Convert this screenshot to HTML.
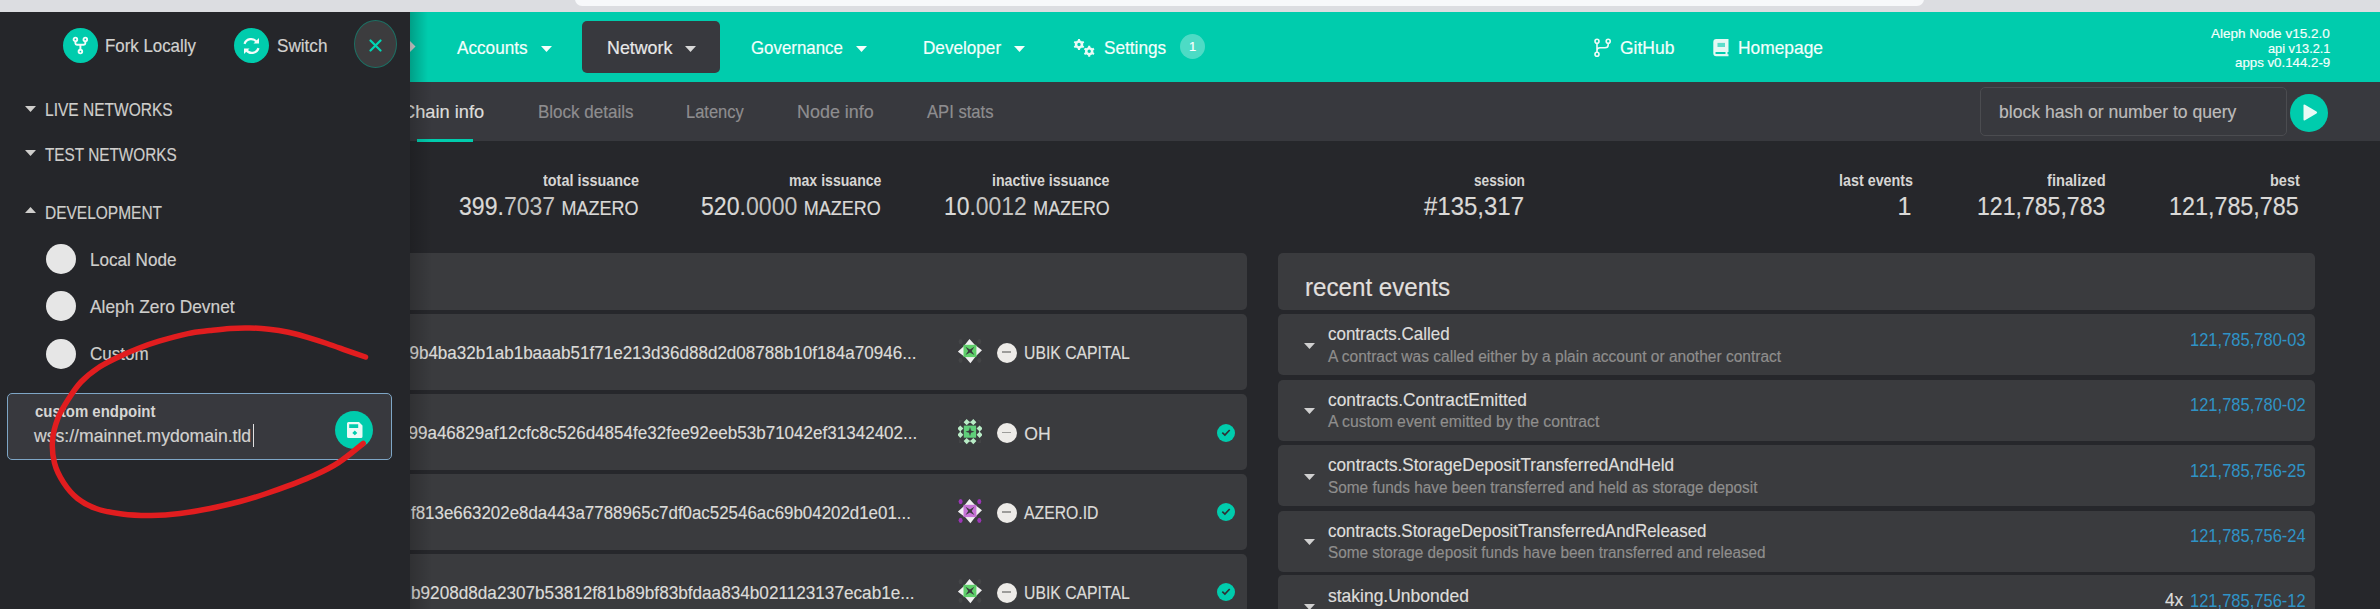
<!DOCTYPE html>
<html><head><meta charset="utf-8"><style>
html,body{margin:0;padding:0;width:2380px;height:609px;overflow:hidden;background:#26272b;}
body{position:relative;font-family:"Liberation Sans",sans-serif;}
.t{position:absolute;white-space:nowrap;line-height:1;-webkit-text-stroke:0.18px currentColor;}
.r{position:absolute;}
#main{position:absolute;left:0;top:0;width:2380px;height:609px;}
#side{position:absolute;left:0;top:0;width:2380px;height:609px;}
</style></head><body>
<div id="main">
<div class="r" style="left:0px;top:0px;width:2380px;height:12px;background:#dcdde1;"></div>
<div class="r" style="left:575px;top:-10px;width:1349px;height:16px;background:#f7f8fa;border-radius:0 0 7px 7px;"></div>
<div class="r" style="left:0px;top:12px;width:2380px;height:597px;background:#26272b;"></div>
<div class="r" style="left:410px;top:12px;width:1970px;height:70px;background:#00ccad;"></div>
<div class="r" style="left:410px;top:82px;width:1970px;height:59px;background:#38393e;"></div>
<div class="r" style="left:417px;top:139px;width:56px;height:3px;background:#00ccad;"></div>
<svg class="r" style="left:410px;top:41px" width="6" height="11"><path d="M0 0 L5.5 5.5 L0 11Z" fill="#d8d8d8"/></svg>
<div class="t" style="left:457.30px;top:39.63px;font-size:17.8px;color:#f4fffc;font-weight:400;transform:scaleX(0.9652);transform-origin:0 0;">Accounts</div>
<svg class="r" style="left:541px;top:45.5px" width="11" height="6"><path d="M0 0 L11 0 L5.5 6Z" fill="#f4fffc"/></svg>
<div class="r" style="left:582px;top:21px;width:138px;height:52px;background:#38393e;border-radius:5px;"></div>
<div class="t" style="left:607.00px;top:39.63px;font-size:17.8px;color:#e8e8e8;font-weight:400;transform:scaleX(1.0028);transform-origin:0 0;">Network</div>
<svg class="r" style="left:685px;top:45.5px" width="11" height="6"><path d="M0 0 L11 0 L5.5 6Z" fill="#d8d8d8"/></svg>
<div class="t" style="left:751.20px;top:39.63px;font-size:17.8px;color:#f4fffc;font-weight:400;transform:scaleX(0.9484);transform-origin:0 0;">Governance</div>
<svg class="r" style="left:856px;top:45.5px" width="11" height="6"><path d="M0 0 L11 0 L5.5 6Z" fill="#f4fffc"/></svg>
<div class="t" style="left:922.50px;top:39.63px;font-size:17.8px;color:#f4fffc;font-weight:400;transform:scaleX(0.9634);transform-origin:0 0;">Developer</div>
<svg class="r" style="left:1014px;top:45.5px" width="11" height="6"><path d="M0 0 L11 0 L5.5 6Z" fill="#f4fffc"/></svg>
<svg class="r" style="left:1072px;top:38px" width="24" height="19" viewBox="0 0 24 19">
<path d="M4.90 2.86 L5.86 2.46 L6.02 0.99 L7.98 0.99 L8.14 2.46 L9.10 2.86 L9.93 3.49 L11.28 2.89 L12.26 4.59 L11.07 5.47 L11.20 6.50 L11.07 7.53 L12.26 8.41 L11.28 10.11 L9.93 9.51 L9.10 10.14 L8.14 10.54 L7.98 12.01 L6.02 12.01 L5.86 10.54 L4.90 10.14 L4.07 9.51 L2.72 10.11 L1.74 8.41 L2.93 7.53 L2.80 6.50 L2.93 5.47 L1.74 4.59 L2.72 2.89 L4.07 3.49Z M8.70 6.50 A1.7 1.7 0 1 0 5.30 6.50 A1.7 1.7 0 1 0 8.70 6.50Z M15.10 9.66 L16.06 9.26 L16.22 7.79 L18.18 7.79 L18.34 9.26 L19.30 9.66 L20.13 10.29 L21.48 9.69 L22.46 11.39 L21.27 12.27 L21.40 13.30 L21.27 14.33 L22.46 15.21 L21.48 16.91 L20.13 16.31 L19.30 16.94 L18.34 17.34 L18.18 18.81 L16.22 18.81 L16.06 17.34 L15.10 16.94 L14.27 16.31 L12.92 16.91 L11.94 15.21 L13.13 14.33 L13.00 13.30 L13.13 12.27 L11.94 11.39 L12.92 9.69 L14.27 10.29Z M18.90 13.30 A1.7 1.7 0 1 0 15.50 13.30 A1.7 1.7 0 1 0 18.90 13.30Z" fill="#eafaf6" fill-rule="evenodd"/></svg>
<div class="t" style="left:1103.70px;top:39.63px;font-size:17.8px;color:#f4fffc;font-weight:400;transform:scaleX(0.9682);transform-origin:0 0;">Settings</div>
<div class="r" style="left:1180px;top:34px;width:25px;height:25px;background:rgba(255,255,255,0.3);border-radius:50%;"></div>
<div class="t" style="left:1189.00px;top:40.30px;font-size:13px;color:#ffffff;font-weight:400;">1</div>
<svg class="r" style="left:1594px;top:38px" width="18" height="20" viewBox="0 0 18 20">
<g fill="none" stroke="#f0fbf8" stroke-width="1.6">
<circle cx="3" cy="3.2" r="2"/><circle cx="14.2" cy="3.2" r="2"/><circle cx="3" cy="16.3" r="2"/>
<path d="M3 5.2 V14.3 M14.2 5.2 V7 Q14.2 9.8 11 9.8 H6 Q3 9.8 3 12.5"/>
</g></svg>
<div class="t" style="left:1619.50px;top:39.63px;font-size:17.8px;color:#f4fffc;font-weight:400;transform:scaleX(0.9845);transform-origin:0 0;">GitHub</div>
<svg class="r" style="left:1712px;top:39px" width="18" height="18" viewBox="0 0 18 18">
<path d="M4.3 0 H16.5 V13 H15.5 V15.3 H16.5 V17.3 H4.3 Q1.3 17.3 1.3 14.3 V3 Q1.3 0 4.3 0Z M4.3 13.1 H13.5 V15.1 H4.3 Q3.3 15.1 3.3 14.1 Q3.3 13.1 4.3 13.1Z" fill="#e6f8f4" fill-rule="evenodd"/>
<rect x="5.5" y="3.9" width="7.5" height="4.1" fill="#00ccad" opacity="0.6"/>
</svg>
<div class="t" style="left:1738.00px;top:39.63px;font-size:17.8px;color:#f4fffc;font-weight:400;transform:scaleX(0.9765);transform-origin:0 0;">Homepage</div>
<div class="t" style="left:2211.20px;top:27.19px;font-size:13.6px;color:#f4fffc;font-weight:400;transform:scaleX(0.9943);transform-origin:0 0;">Aleph Node v15.2.0</div>
<div class="t" style="left:2267.50px;top:41.79px;font-size:13.6px;color:#f4fffc;font-weight:400;transform:scaleX(0.9388);transform-origin:0 0;">api v13.2.1</div>
<div class="t" style="left:2234.80px;top:56.29px;font-size:13.6px;color:#f4fffc;font-weight:400;transform:scaleX(0.9763);transform-origin:0 0;">apps v0.144.2-9</div>
<div class="t" style="left:402.00px;top:103.63px;font-size:17.8px;color:#dedddb;font-weight:400;transform:scaleX(1.0263);transform-origin:0 0;">Chain info</div>
<div class="t" style="left:537.70px;top:103.63px;font-size:17.8px;color:#8e8d8f;font-weight:400;transform:scaleX(0.9565);transform-origin:0 0;">Block details</div>
<div class="t" style="left:686.40px;top:103.63px;font-size:17.8px;color:#8e8d8f;font-weight:400;transform:scaleX(0.9280);transform-origin:0 0;">Latency</div>
<div class="t" style="left:797.20px;top:103.63px;font-size:17.8px;color:#8e8d8f;font-weight:400;transform:scaleX(1.0081);transform-origin:0 0;">Node info</div>
<div class="t" style="left:926.90px;top:103.63px;font-size:17.8px;color:#8e8d8f;font-weight:400;transform:scaleX(0.9354);transform-origin:0 0;">API stats</div>
<div class="r" style="left:1980px;top:87px;width:307px;height:48.5px;background:transparent;border:1px solid #4b4c50;border-radius:5px;box-sizing:border-box;"></div>
<div class="t" style="left:1999.30px;top:103.63px;font-size:17.8px;color:#bdbcbb;font-weight:400;transform:scaleX(0.9884);transform-origin:0 0;">block hash or number to query</div>
<div class="r" style="left:2290px;top:94px;width:38px;height:38px;background:#00ccad;border-radius:50%;"></div>
<svg class="r" style="left:2302px;top:104px" width="16" height="18"><path d="M1.5 1.5 Q1.5 0 3 0.8 L14.5 7.6 Q15.8 8.5 14.5 9.4 L3 16.2 Q1.5 17 1.5 15.5Z" fill="#e8faf6"/></svg>
<div class="t" style="left:542.60px;top:172.69px;font-size:15.6px;color:#d6d5d3;font-weight:700;transform:scaleX(0.9236);transform-origin:0 0;-webkit-text-stroke:0;">total issuance</div>
<div class="t" style="left:788.50px;top:172.69px;font-size:15.6px;color:#d6d5d3;font-weight:700;transform:scaleX(0.9039);transform-origin:0 0;-webkit-text-stroke:0;">max issuance</div>
<div class="t" style="left:992.00px;top:172.69px;font-size:15.6px;color:#d6d5d3;font-weight:700;transform:scaleX(0.9097);transform-origin:0 0;-webkit-text-stroke:0;">inactive issuance</div>
<div class="t" style="left:1474.00px;top:172.69px;font-size:15.6px;color:#d6d5d3;font-weight:700;transform:scaleX(0.8776);transform-origin:0 0;-webkit-text-stroke:0;">session</div>
<div class="t" style="left:1839.30px;top:172.69px;font-size:15.6px;color:#d6d5d3;font-weight:700;transform:scaleX(0.9188);transform-origin:0 0;-webkit-text-stroke:0;">last events</div>
<div class="t" style="left:2047.20px;top:172.69px;font-size:15.6px;color:#d6d5d3;font-weight:700;transform:scaleX(0.9407);transform-origin:0 0;-webkit-text-stroke:0;">finalized</div>
<div class="t" style="left:2269.60px;top:172.69px;font-size:15.6px;color:#d6d5d3;font-weight:700;transform:scaleX(0.9296);transform-origin:0 0;-webkit-text-stroke:0;">best</div>
<div class="t" style="left:458.90px;top:194.24px;font-size:25px;color:#dad9d7;transform:scaleX(0.9222);transform-origin:0 0;"><span style="color:#dad9d7">399.</span><span style="color:#c4c3c1;-webkit-text-stroke:0;">7037</span> <span style="font-size:19.5px;color:#dad9d7">MAZERO</span></div>
<div class="t" style="left:701.20px;top:194.24px;font-size:25px;color:#dad9d7;transform:scaleX(0.9238);transform-origin:0 0;"><span style="color:#dad9d7">520.</span><span style="color:#c4c3c1;-webkit-text-stroke:0;">0000</span> <span style="font-size:19.5px;color:#dad9d7">MAZERO</span></div>
<div class="t" style="left:943.80px;top:194.24px;font-size:25px;color:#dad9d7;transform:scaleX(0.9168);transform-origin:0 0;"><span style="color:#dad9d7">10.</span><span style="color:#c4c3c1;-webkit-text-stroke:0;">0012</span> <span style="font-size:19.5px;color:#dad9d7">MAZERO</span></div>
<div class="t" style="left:1424.30px;top:194.24px;font-size:25px;color:#dad9d7;font-weight:400;transform:scaleX(0.9592);transform-origin:0 0;">#135,317</div>
<div class="t" style="left:1897.42px;top:194.24px;font-size:25px;color:#dad9d7;font-weight:400;">1</div>
<div class="t" style="left:1976.60px;top:194.24px;font-size:25px;color:#dad9d7;font-weight:400;transform:scaleX(0.9230);transform-origin:0 0;">121,785,783</div>
<div class="t" style="left:2169.30px;top:194.24px;font-size:25px;color:#dad9d7;font-weight:400;transform:scaleX(0.9331);transform-origin:0 0;">121,785,785</div>
<div class="r" style="left:300px;top:253px;width:947px;height:56.5px;background:#3a3b3e;border-radius:5px;"></div>
<div class="r" style="left:300px;top:314px;width:947px;height:75.5px;background:#3a3b3e;border-radius:5px;"></div>
<div class="t" style="left:381.19px;top:343.71px;font-size:18.3px;color:#dcdbd9;transform:scaleX(0.9320);transform-origin:0 0;">1d89b4ba32b1ab1baaab51f71e213d36d88d2d08788b10f184a70946...</div>
<svg class="r" style="left:958px;top:339px" width="26" height="26" viewBox="0 0 26 26">
<g fill="#444547"><ellipse cx="2.6" cy="2.6" rx="2" ry="2.6"/><ellipse cx="21.3" cy="2.6" rx="2" ry="2.6"/><ellipse cx="2.6" cy="21.3" rx="2" ry="2.6"/><ellipse cx="21.3" cy="21.3" rx="2" ry="2.6"/></g>
<path d="M11.5 0 L16.5 5.5 L24 11.2 L18.5 16.5 L12.4 24.2 L7.5 18.5 L-0.2 12.7 L5.5 7.5Z" fill="#f0f0f0"/>
<rect x="5.5" y="5.8" width="12.9" height="12.3" fill="#5fcf6a"/>
<path d="M7.5 7.8 L11.95 10.5 L16.4 7.8 L13.7 11.95 L16.4 16.1 L11.95 13.4 L7.5 16.1 L10.2 11.95Z" fill="#3a3b3e"/>
</svg>
<div class="r" style="left:996.65px;top:342.55px;width:20.5px;height:20.5px;background:#edebe8;border-radius:50%;"></div>
<div class="r" style="left:1001.5px;top:351.3px;width:9.5px;height:1.6px;background:#9d9c9a;"></div>
<div class="t" style="left:1024.30px;top:345.30px;font-size:17.6px;color:#dcdbd9;font-weight:400;transform:scaleX(0.8957);transform-origin:0 0;">UBIK CAPITAL</div>
<div class="r" style="left:300px;top:394.3px;width:947px;height:75.5px;background:#3a3b3e;border-radius:5px;"></div>
<div class="t" style="left:381.15px;top:424.01px;font-size:18.3px;color:#dcdbd9;transform:scaleX(0.9320);transform-origin:0 0;">4c599a46829af12cfc8c526d4854fe32fee92eeb53b71042ef31342402...</div>
<svg class="r" style="left:958px;top:419.3px" width="24" height="26" viewBox="0 0 24 26">
<g fill="#434446"><path d="M1 1 L5 1 L1 5Z M23 1 L23 5 L19 1Z M1 24 L1 20 L5 24Z M23 24 L19 24 L23 20Z"/></g>
<path d="M8.7 0.10000000000000009l3.1 3.1-3.1 3.1-3.1-3.1zM15.3 0.10000000000000009l3.1 3.1-3.1 3.1-3.1-3.1zM2.3 6.4l3.1 3.1-3.1 3.1-3.1-3.1zM2.3 12.700000000000001l3.1 3.1-3.1 3.1-3.1-3.1zM21.6 6.4l3.1 3.1-3.1 3.1-3.1-3.1zM21.6 12.700000000000001l3.1 3.1-3.1 3.1-3.1-3.1zM8.7 19.0l3.1 3.1-3.1 3.1-3.1-3.1zM15.3 19.0l3.1 3.1-3.1 3.1-3.1-3.1z" fill="#b8ecc6"/>
<path d="M8.7 3.2 H15.3 M2.3 9.5 V15.8 M21.6 9.5 V15.8 M8.7 22.1 H15.3" stroke="#b8ecc6" stroke-width="0.8"/>
<rect x="5.8" y="6.6" width="12.3" height="12.1" fill="#5fcf7a"/>
<path d="M12 8 L13 11.6 L16.5 12.7 L13 13.7 L12 17.3 L11 13.7 L7.5 12.7 L11 11.6Z" fill="#3a3b3e"/>
</svg>
<div class="r" style="left:996.65px;top:422.85px;width:20.5px;height:20.5px;background:#edebe8;border-radius:50%;"></div>
<div class="r" style="left:1001.5px;top:431.6px;width:9.5px;height:1.6px;background:#9d9c9a;"></div>
<div class="t" style="left:1024.30px;top:425.60px;font-size:17.6px;color:#dcdbd9;font-weight:400;">OH</div>
<svg class="r" style="left:1216.5px;top:423.6px" width="18" height="18"><circle cx="9" cy="9" r="9" fill="#00ccad"/><path d="M5.3 8.6 L7.9 11.0 L12.7 6.0" fill="none" stroke="#2f3034" stroke-width="1.7"/></svg>
<div class="r" style="left:300px;top:474px;width:947px;height:75.5px;background:#3a3b3e;border-radius:5px;"></div>
<div class="t" style="left:410.80px;top:503.71px;font-size:18.3px;color:#dcdbd9;transform:scaleX(0.9243);transform-origin:0 0;">f813e663202e8da443a7788965c7df0ac52546ac69b04202d1e01...</div>
<svg class="r" style="left:958px;top:499px" width="26" height="26" viewBox="0 0 26 26">
<g fill="#9a35b5"><ellipse cx="2.6" cy="2.6" rx="2" ry="2.6"/><ellipse cx="21.3" cy="2.6" rx="2" ry="2.6"/><ellipse cx="2.6" cy="21.3" rx="2" ry="2.6"/><ellipse cx="21.3" cy="21.3" rx="2" ry="2.6"/></g>
<path d="M11.5 0 L16.5 5.5 L24 11.2 L18.5 16.5 L12.4 24.2 L7.5 18.5 L-0.2 12.7 L5.5 7.5Z" fill="#f0f0f0"/>
<rect x="5.5" y="5.8" width="12.9" height="12.3" fill="#c774d6"/>
<path d="M7.5 7.8 L11.95 10.5 L16.4 7.8 L13.7 11.95 L16.4 16.1 L11.95 13.4 L7.5 16.1 L10.2 11.95Z" fill="#3a3b3e"/>
</svg>
<div class="r" style="left:996.65px;top:502.55px;width:20.5px;height:20.5px;background:#edebe8;border-radius:50%;"></div>
<div class="r" style="left:1001.5px;top:511.3px;width:9.5px;height:1.6px;background:#9d9c9a;"></div>
<div class="t" style="left:1024.30px;top:505.30px;font-size:17.6px;color:#dcdbd9;font-weight:400;transform:scaleX(0.8959);transform-origin:0 0;">AZERO.ID</div>
<svg class="r" style="left:1216.5px;top:503.3px" width="18" height="18"><circle cx="9" cy="9" r="9" fill="#00ccad"/><path d="M5.3 8.6 L7.9 11.0 L12.7 6.0" fill="none" stroke="#2f3034" stroke-width="1.7"/></svg>
<div class="r" style="left:300px;top:554px;width:947px;height:75.5px;background:#3a3b3e;border-radius:5px;"></div>
<div class="t" style="left:410.80px;top:583.71px;font-size:18.3px;color:#dcdbd9;transform:scaleX(0.9387);transform-origin:0 0;">b9208d8da2307b53812f81b89bf83bfdaa834b021123137ecab1e...</div>
<svg class="r" style="left:958px;top:579px" width="26" height="26" viewBox="0 0 26 26">
<g fill="#444547"><ellipse cx="2.6" cy="2.6" rx="2" ry="2.6"/><ellipse cx="21.3" cy="2.6" rx="2" ry="2.6"/><ellipse cx="2.6" cy="21.3" rx="2" ry="2.6"/><ellipse cx="21.3" cy="21.3" rx="2" ry="2.6"/></g>
<path d="M11.5 0 L16.5 5.5 L24 11.2 L18.5 16.5 L12.4 24.2 L7.5 18.5 L-0.2 12.7 L5.5 7.5Z" fill="#f0f0f0"/>
<rect x="5.5" y="5.8" width="12.9" height="12.3" fill="#5fcf6a"/>
<path d="M7.5 7.8 L11.95 10.5 L16.4 7.8 L13.7 11.95 L16.4 16.1 L11.95 13.4 L7.5 16.1 L10.2 11.95Z" fill="#3a3b3e"/>
</svg>
<div class="r" style="left:996.65px;top:582.55px;width:20.5px;height:20.5px;background:#edebe8;border-radius:50%;"></div>
<div class="r" style="left:1001.5px;top:591.3px;width:9.5px;height:1.6px;background:#9d9c9a;"></div>
<div class="t" style="left:1024.30px;top:585.30px;font-size:17.6px;color:#dcdbd9;font-weight:400;transform:scaleX(0.8957);transform-origin:0 0;">UBIK CAPITAL</div>
<svg class="r" style="left:1216.5px;top:583.3px" width="18" height="18"><circle cx="9" cy="9" r="9" fill="#00ccad"/><path d="M5.3 8.6 L7.9 11.0 L12.7 6.0" fill="none" stroke="#2f3034" stroke-width="1.7"/></svg>
<div class="r" style="left:410px;top:253px;width:22px;height:380px;background:linear-gradient(to right, rgba(0,0,0,0.18), rgba(0,0,0,0));"></div>
<div class="r" style="left:1278px;top:253px;width:1037px;height:56.5px;background:#3a3b3e;border-radius:5px;"></div>
<div class="t" style="left:1305.10px;top:275.21px;font-size:25.5px;color:#e0dfdd;font-weight:400;transform:scaleX(0.9469);transform-origin:0 0;">recent events</div>
<div class="r" style="left:1278px;top:314px;width:1037px;height:61px;background:#3a3b3e;border-radius:5px;"></div>
<svg class="r" style="left:1304px;top:342.5px" width="11" height="6"><path d="M0 0 L11 0 L5.5 6Z" fill="#d0d0d0"/></svg>
<div class="t" style="left:1328.30px;top:326.43px;font-size:17.8px;color:#dedddb;font-weight:400;transform:scaleX(0.9536);transform-origin:0 0;">contracts.Called</div>
<div class="t" style="left:1328.30px;top:348.63px;font-size:15.8px;color:#8f8e8d;font-weight:400;transform:scaleX(0.9830);transform-origin:0 0;">A contract was called either by a plain account or another contract</div>
<div class="t" style="left:2189.60px;top:331.53px;font-size:17.8px;color:#2f93c6;font-weight:400;transform:scaleX(0.9287);transform-origin:0 0;-webkit-text-stroke:0;">121,785,780-03</div>
<div class="r" style="left:1278px;top:379.5px;width:1037px;height:61px;background:#3a3b3e;border-radius:5px;"></div>
<svg class="r" style="left:1304px;top:408.0px" width="11" height="6"><path d="M0 0 L11 0 L5.5 6Z" fill="#d0d0d0"/></svg>
<div class="t" style="left:1328.30px;top:391.93px;font-size:17.8px;color:#dedddb;font-weight:400;transform:scaleX(0.9727);transform-origin:0 0;">contracts.ContractEmitted</div>
<div class="t" style="left:1328.30px;top:414.13px;font-size:15.8px;color:#8f8e8d;font-weight:400;transform:scaleX(0.9966);transform-origin:0 0;">A custom event emitted by the contract</div>
<div class="t" style="left:2189.60px;top:397.03px;font-size:17.8px;color:#2f93c6;font-weight:400;transform:scaleX(0.9287);transform-origin:0 0;-webkit-text-stroke:0;">121,785,780-02</div>
<div class="r" style="left:1278px;top:445px;width:1037px;height:61px;background:#3a3b3e;border-radius:5px;"></div>
<svg class="r" style="left:1304px;top:473.5px" width="11" height="6"><path d="M0 0 L11 0 L5.5 6Z" fill="#d0d0d0"/></svg>
<div class="t" style="left:1328.30px;top:457.43px;font-size:17.8px;color:#dedddb;font-weight:400;transform:scaleX(0.9636);transform-origin:0 0;">contracts.StorageDepositTransferredAndHeld</div>
<div class="t" style="left:1328.30px;top:479.63px;font-size:15.8px;color:#8f8e8d;font-weight:400;transform:scaleX(0.9721);transform-origin:0 0;">Some funds have been transferred and held as storage deposit</div>
<div class="t" style="left:2189.60px;top:462.53px;font-size:17.8px;color:#2f93c6;font-weight:400;transform:scaleX(0.9287);transform-origin:0 0;-webkit-text-stroke:0;">121,785,756-25</div>
<div class="r" style="left:1278px;top:510.5px;width:1037px;height:61px;background:#3a3b3e;border-radius:5px;"></div>
<svg class="r" style="left:1304px;top:539.0px" width="11" height="6"><path d="M0 0 L11 0 L5.5 6Z" fill="#d0d0d0"/></svg>
<div class="t" style="left:1328.30px;top:522.93px;font-size:17.8px;color:#dedddb;font-weight:400;transform:scaleX(0.9518);transform-origin:0 0;">contracts.StorageDepositTransferredAndReleased</div>
<div class="t" style="left:1328.30px;top:545.13px;font-size:15.8px;color:#8f8e8d;font-weight:400;transform:scaleX(0.9695);transform-origin:0 0;">Some storage deposit funds have been transferred and released</div>
<div class="t" style="left:2189.60px;top:528.03px;font-size:17.8px;color:#2f93c6;font-weight:400;transform:scaleX(0.9287);transform-origin:0 0;-webkit-text-stroke:0;">121,785,756-24</div>
<div class="r" style="left:1278px;top:575.3px;width:1037px;height:61px;background:#3a3b3e;border-radius:5px;"></div>
<svg class="r" style="left:1304px;top:603.8px" width="11" height="6"><path d="M0 0 L11 0 L5.5 6Z" fill="#d0d0d0"/></svg>
<div class="t" style="left:1328.30px;top:587.73px;font-size:17.8px;color:#dedddb;font-weight:400;transform:scaleX(0.9828);transform-origin:0 0;">staking.Unbonded</div>
<div class="t" style="left:2189.60px;top:592.83px;font-size:17.8px;color:#2f93c6;font-weight:400;transform:scaleX(0.9287);transform-origin:0 0;-webkit-text-stroke:0;">121,785,756-12</div>
<div class="t" style="left:2165.40px;top:592.13px;font-size:17.8px;color:#dedddb;font-weight:400;transform:scaleX(0.9692);transform-origin:0 0;">4x</div>
</div>
<div id="side">
<div class="r" style="left:0px;top:12px;width:410px;height:597px;background:#25262a;"></div>
<div class="r" style="left:410px;top:12px;width:18px;height:70px;background:linear-gradient(to right, rgba(0,0,0,0.22), rgba(0,0,0,0));"></div>
<div class="r" style="left:410px;top:82px;width:22px;height:171px;background:linear-gradient(to right, rgba(0,0,0,0.18), rgba(0,0,0,0));"></div>
<div class="r" style="left:63px;top:28px;width:35px;height:35px;background:#00ccad;border-radius:50%;"></div>
<svg class="r" style="left:72px;top:36px" width="17" height="19" viewBox="0 0 17 19">
<g fill="none" stroke="#f2fcfa" stroke-width="1.9">
<circle cx="3.4" cy="3.4" r="1.8"/><circle cx="13.3" cy="3.4" r="1.8"/><circle cx="8.4" cy="15.6" r="1.8"/>
<path d="M3.4 5.2 V7.2 Q3.4 8.7 4.9 8.7 H11.8 Q13.3 8.7 13.3 7.2 V5.2 M8.4 8.7 V13.8"/>
</g></svg>
<div class="t" style="left:105.00px;top:37.73px;font-size:17.8px;color:#d2d1cf;font-weight:400;transform:scaleX(0.9485);transform-origin:0 0;">Fork Locally</div>
<div class="r" style="left:233.8px;top:28px;width:35px;height:35px;background:#00ccad;border-radius:50%;"></div>
<svg class="r" style="left:242px;top:37px" width="19" height="18" viewBox="0 0 19 18">
<g fill="none" stroke="#f2fcfa" stroke-width="2.2">
<path d="M2.5 6.8 A7 7 0 0 1 14.8 5"/><path d="M16.5 11.2 A7 7 0 0 1 4.2 13"/>
</g>
<path d="M11.5 6.5 L17 6.5 L17 1Z" fill="#f2fcfa"/><path d="M7.5 11.5 L2 11.5 L2 17Z" fill="#f2fcfa"/>
</svg>
<div class="t" style="left:276.50px;top:37.73px;font-size:17.8px;color:#d2d1cf;font-weight:400;transform:scaleX(0.9634);transform-origin:0 0;">Switch</div>
<div class="r" style="left:354.3px;top:20.2px;width:43px;height:48px;background:#3c3c3e;border-radius:50%;border:1px solid #1d6f63;box-sizing:border-box;"></div>
<svg class="r" style="left:369px;top:39px" width="13" height="13"><path d="M1.5 1.5 L11.5 11.5 M11.5 1.5 L1.5 11.5" stroke="#00d6b4" stroke-width="2.2" stroke-linecap="round"/></svg>
<svg class="r" style="left:25px;top:106px" width="11" height="6"><path d="M0 0 L11 0 L5.5 6Z" fill="#cfcecc"/></svg>
<div class="t" style="left:45.00px;top:101.46px;font-size:18px;color:#cfcecc;font-weight:400;transform:scaleX(0.8625);transform-origin:0 0;">LIVE NETWORKS</div>
<svg class="r" style="left:25px;top:150px" width="11" height="6"><path d="M0 0 L11 0 L5.5 6Z" fill="#cfcecc"/></svg>
<div class="t" style="left:45.00px;top:145.76px;font-size:18px;color:#cfcecc;font-weight:400;transform:scaleX(0.8513);transform-origin:0 0;">TEST NETWORKS</div>
<svg class="r" style="left:25px;top:207px" width="11" height="6"><path d="M0 6 L5.5 0 L11 6Z" fill="#cfcecc"/></svg>
<div class="t" style="left:45.00px;top:203.76px;font-size:18px;color:#cfcecc;font-weight:400;transform:scaleX(0.8604);transform-origin:0 0;">DEVELOPMENT</div>
<div class="r" style="left:45.6px;top:244px;width:30.4px;height:30.4px;background:#e6e6e6;border-radius:50%;"></div>
<div class="t" style="left:89.80px;top:251.73px;font-size:17.8px;color:#cfcecc;font-weight:400;transform:scaleX(0.9615);transform-origin:0 0;">Local Node</div>
<div class="r" style="left:45.6px;top:291px;width:30.4px;height:30.4px;background:#e6e6e6;border-radius:50%;"></div>
<div class="t" style="left:89.80px;top:299.43px;font-size:17.8px;color:#cfcecc;font-weight:400;transform:scaleX(0.9754);transform-origin:0 0;">Aleph Zero Devnet</div>
<div class="r" style="left:45.6px;top:338.7px;width:30.4px;height:30.4px;background:#e6e6e6;border-radius:50%;"></div>
<div class="t" style="left:89.80px;top:345.93px;font-size:17.8px;color:#cfcecc;font-weight:400;transform:scaleX(0.9556);transform-origin:0 0;">Custom</div>
<div class="r" style="left:7.2px;top:393px;width:385px;height:67px;background:#38393e;border:1px solid #7ea6c6;border-radius:5px;box-sizing:border-box;"></div>
<div class="t" style="left:34.50px;top:403.79px;font-size:15.6px;color:#d6d5d3;font-weight:700;transform:scaleX(0.9590);transform-origin:0 0;-webkit-text-stroke:0;">custom endpoint</div>
<div class="t" style="left:34.09px;top:427.93px;font-size:17.8px;color:#d2d1cf;font-weight:400;transform:scaleX(0.9898);transform-origin:0 0;">wss://mainnet.mydomain.tld</div>
<div class="r" style="left:252.5px;top:424px;width:1.2px;height:23px;background:#e0e0e0;"></div>
<div class="r" style="left:335px;top:411px;width:38px;height:38px;background:#00ccad;border-radius:50%;"></div>
<svg class="r" style="left:346.5px;top:421.7px" width="16" height="16" viewBox="0 0 16 16">
<path d="M1.5 0 H12 L15.5 3.5 V14.5 Q15.5 16 14 16 H1.5 Q0 16 0 14.5 V1.5 Q0 0 1.5 0Z M2.2 2.2 V6 H11.2 V2.2Z M7.8 8.5 L10.3 10.9 L7.8 13.3 L5.3 10.9Z" fill="#e9faf6" fill-rule="evenodd"/>
</svg>
<svg class="r" style="left:0;top:0;z-index:5" width="420" height="609" viewBox="0 0 420 609">
<path d="M365.5 357 C362.3 355.9 352.6 352.6 346.2 350.4 C339.8 348.1 333.3 345.7 326.9 343.5 C320.5 341.3 314.0 339.2 307.6 337.3 C301.2 335.4 294.7 333.7 288.3 332.3 C281.9 330.9 275.4 329.9 269 329.2 C262.6 328.5 256.2 328.1 249.7 328 C243.2 327.9 236.6 328.0 230 328.4 C223.4 328.8 217.0 329.7 210 330.6 C203.0 331.5 196.5 331.8 188 333.6 C179.5 335.4 167.4 338.7 159.1 341.2 C150.8 343.7 144.9 345.8 138 348.5 C131.1 351.2 124.2 354.2 117.5 357.5 C110.8 360.8 104.1 363.9 98 368 C91.9 372.1 85.9 376.8 81 382 C76.1 387.2 72.3 393.0 68.5 399 C64.7 405.0 60.7 411.1 58 418 C55.3 424.9 53.1 433.0 52.5 440.5 C51.9 448.0 52.7 456.0 54.5 463 C56.3 470.0 59.7 476.6 63.5 482.5 C67.3 488.4 72.1 494.2 77.5 498.5 C82.9 502.8 88.6 505.9 96 508.5 C103.4 511.1 112.8 512.8 122 514 C131.2 515.2 141.6 515.6 151.3 515.5 C161.0 515.4 170.2 514.7 180 513.5 C189.8 512.3 200.0 510.5 210 508.5 C220.0 506.5 230.8 503.9 240 501.5 C249.2 499.1 256.8 496.7 265 494 C273.2 491.3 281.2 488.5 289.3 485.4 C297.4 482.3 305.7 479.4 313.9 475.6 C322.1 471.8 330.3 468.0 338.5 462.6 C346.7 457.2 359.1 446.7 363.2 443.5" fill="none" stroke="#e11d1f" stroke-width="5.5" stroke-linecap="round"/>
</svg>
</div>
</body></html>
